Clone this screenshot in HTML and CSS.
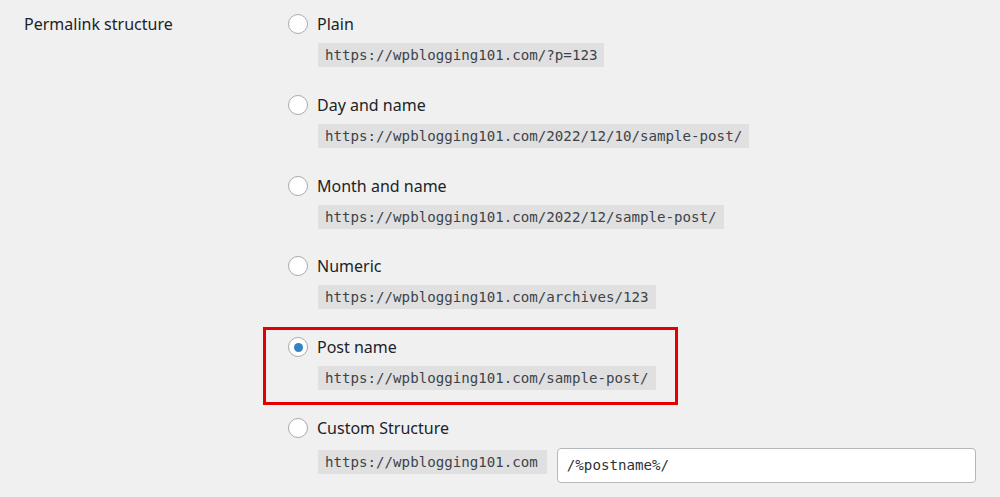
FILE: index.html
```html
<!DOCTYPE html>
<html>
<head>
<meta charset="utf-8">
<link rel="stylesheet" href="styles.css">
</head>
<body>
<div class="form-row">
  <div class="row-label">Permalink structure</div>
  <div class="options">
    <div class="option">
      <div class="opt-head"><span class="radio"></span><span class="opt-name">Plain</span></div>
      <code class="url">https://wpblogging101.com/?p=123</code>
    </div>
    <div class="option">
      <div class="opt-head"><span class="radio"></span><span class="opt-name">Day and name</span></div>
      <code class="url">https://wpblogging101.com/2022/12/10/sample-post/</code>
    </div>
    <div class="option">
      <div class="opt-head"><span class="radio"></span><span class="opt-name">Month and name</span></div>
      <code class="url">https://wpblogging101.com/2022/12/sample-post/</code>
    </div>
    <div class="option">
      <div class="opt-head"><span class="radio"></span><span class="opt-name">Numeric</span></div>
      <code class="url">https://wpblogging101.com/archives/123</code>
    </div>
    <div class="option highlighted">
      <div class="opt-head"><span class="radio checked"></span><span class="opt-name">Post name</span></div>
      <code class="url">https://wpblogging101.com/sample-post/</code>
    </div>
    <div class="option custom">
      <div class="opt-head"><span class="radio"></span><span class="opt-name">Custom Structure</span></div>
      <div class="custom-row">
        <code class="url">https://wpblogging101.com</code>
        <div class="text-input">/%postname%/</div>
      </div>
    </div>
  </div>
</div>
</body>
</html>
```

FILE: styles.css
```css
html, body {
  margin: 0;
  padding: 0;
  background: #f0f0f1;
}
body {
  font-family: "Noto Sans", "Open Sans", sans-serif;
  color: #1d2327;
  height: 497px;
  overflow: hidden;
}
.form-row {
  display: grid;
  grid-template-columns: 264px 1fr;
  padding: 14px 0 0 24px;
}
.row-label {
  font-size: 16px;
  line-height: 20px;
  font-weight: 400;
}
.options {
  display: flex;
  flex-direction: column;
}
.option {
  position: relative;
  display: flex;
  flex-direction: column;
  margin-bottom: 27.8px;
}
.opt-head {
  display: flex;
  align-items: center;
  height: 20px;
  gap: 9px;
}
.radio {
  box-sizing: border-box;
  width: 20px;
  height: 20px;
  border-radius: 50%;
  border: 1px solid #a7aaad;
  background: #fff;
  display: flex;
  align-items: center;
  justify-content: center;
  flex: none;
}
.radio.checked::before {
  content: "";
  width: 9px;
  height: 9px;
  border-radius: 50%;
  background: #3582c4;
}
.opt-name {
  font-size: 16px;
  line-height: 20px;
  font-weight: 400;
}
.url {
  display: inline-block;
  align-self: flex-start;
  margin: 9px 0 0 30px;
  padding: 0 7px;
  height: 24px;
  line-height: 24px;
  background: #e0e0e0;
  color: #3c434a;
  font-family: "DejaVu Sans Mono", "Liberation Mono", monospace;
  font-size: 14.15px;
}
.highlighted::after {
  content: "";
  position: absolute;
  left: -25px;
  top: -10px;
  width: 409px;
  height: 72px;
  border: 3px solid #e20000;
}
.custom-row {
  display: flex;
  align-items: center;
  gap: 10px;
  margin: 10px 0 0 30px;
}
.custom-row .url {
  margin: 2px 0 0 0;
  padding: 0 9px 0 7px;
}
.text-input {
  box-sizing: border-box;
  width: 419px;
  height: 35px;
  border: 1px solid #b4b7bb;
  border-radius: 4px;
  background: #fff;
  padding: 0 9px;
  line-height: 33px;
  font-family: "DejaVu Sans Mono", "Liberation Mono", monospace;
  font-size: 14.15px;
  color: #2c3338;
}
```
